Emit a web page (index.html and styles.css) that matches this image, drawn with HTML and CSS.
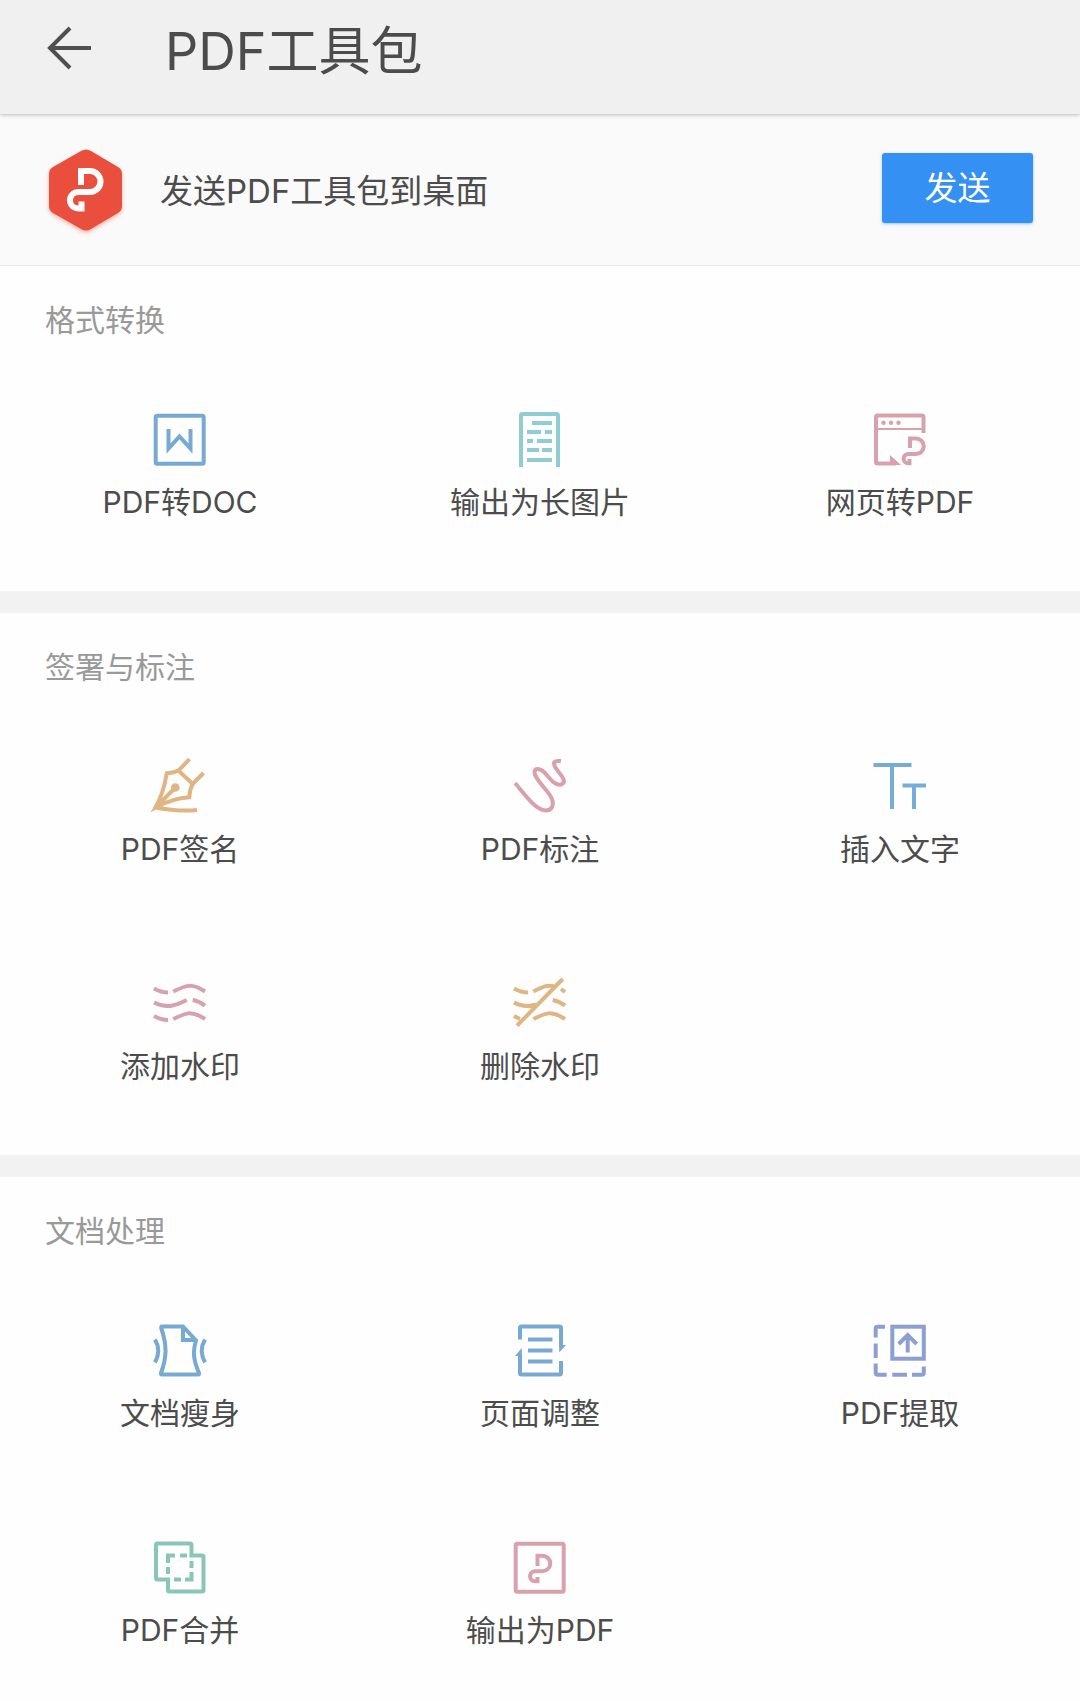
FILE: index.html
```html
<!DOCTYPE html>
<html lang="zh-CN">
<head>
  <meta charset="UTF-8" />
  <meta name="viewport" content="width=device-width, initial-scale=1.0" />
  <title>PDF工具包</title>
  <link rel="stylesheet" href="styles.css">
</head>
<body>
  <header class="topbar">
    <button type="button" class="back" aria-label="返回">
      <svg width="48" height="48" viewBox="0 0 48 48"><path d="M25 4L5 24l20 20M5 24h41" /></svg>
    </button>
    <h1>PDF工具包</h1>
  </header>

  <main>
    <div class="banner">
      <svg class="logo" width="80" height="90" viewBox="0 -3 80 90">
        <path class="logo-shape" d="M36 5q5-3 10 0l27 16q4 2 4 7v32q0 5-4 7L46 83q-5 3-10 0L8 67q-4-2-4-7V28q0-5 4-7z" />
        <path class="logo-mark" d="M36 39V25h9a10.500 10.500 0 0 1 0 21H34c-12 0-12 16.500 0 16.500h2.500v-7" />
      </svg>
      <p>发送PDF工具包到桌面</p>
      <button type="button" class="send">发送</button>
    </div>

    <section class="group">
      <h2>格式转换</h2>
      <div class="tools">
        <a href="#" class="tool">
          <svg class="icon blue" viewBox="0 0 60 60"><rect x="5.700" y="5.700" width="48" height="48" rx="1.500" /><path d="M18.500 19v19.500L29.500 26.500l11 12V19" /></svg>
          <span>PDF转DOC</span>
        </a>
        <a href="#" class="tool">
          <svg class="icon cyan" viewBox="0 0 60 60"><path d="M11 57V5.500q0-1.500 1.500-1.500h34q1.500 0 1.500 1.500V57M22 13h20M17 22h14M35 22h7M17 31h6M27 31h15M17 40h12M32 40h10M17 50h25" /></svg>
          <span>输出为长图片</span>
        </a>
        <a href="#" class="tool">
          <svg class="icon pink" viewBox="0 0 60 60"><path d="M53.500 23V7q0-1.500-1.500-1.500H7.500Q6 5.500 6 7v45q0 1.500 1.500 1.500H26" /><path class="thin" d="M6 19h47" /><path class="solid" d="M20 45l11 10H20z" /><circle class="solid" cx="13.500" cy="12.700" r="2.200" /><circle class="solid" cx="21" cy="12.700" r="2.200" /><circle class="solid" cx="28.500" cy="12.700" r="2.200" /><path d="M40 38v-9.500h6a7.500 7.500 0 0 1 0 15.500h-7.500c-6.500 0-6.500 9.300 0 9.300h1V49" /></svg>
          <span>网页转PDF</span>
        </a>
      </div>
    </section>

    <section class="group">
      <h2>签署与标注</h2>
      <div class="tools">
        <a href="#" class="tool">
          <svg class="icon gold" viewBox="0 0 60 60"><path d="M39.500 2L28.500 13.700 42.700 27 53.500 16M28.500 13.700Q23 16 16.700 16.300 14 35 5.500 50.500 22 41.500 39.300 40.300 39.500 33 42.700 27M5.500 50.500L25 31M5.500 50.500Q30 55 47 53" /><circle class="solid" cx="25.300" cy="30.500" r="4.300" /></svg>
          <span>PDF签名</span>
        </a>
        <a href="#" class="tool">
          <svg class="icon pink" viewBox="0 0 60 60"><path d="M5 26C13 35 25 53.500 36 53.500C42 53.500 44.500 48 41.500 41C38 33 25 23 24.500 15.500C24.500 10.500 30 11 34 15C39 20 44 29 51 27.500C57 25 52 19 49 15.500C43 8 41 3 51 4" /></svg>
          <span>PDF标注</span>
        </a>
        <a href="#" class="tool">
          <svg class="icon sky" viewBox="0 0 60 60"><path d="M3.500 8h38M22 8v44M32.500 28.500h23.500M44 28.500V52" /></svg>
          <span>插入文字</span>
        </a>
        <a href="#" class="tool">
          <svg class="icon pink" viewBox="0 0 60 60"><path d="M4 14.500q7 4 14 4M23.300 17.500c12-6 18-9 31.700 0M4 28.500c12 6 20 4 32.700-2.500M42.700 26q6 1 12.300 5.500M4 42q7 4 14 4M23.300 45c12-6 18-9 31.700 0" /></svg>
          <span>添加水印</span>
        </a>
        <a href="#" class="tool">
          <svg class="icon gold" viewBox="0 0 60 60"><path d="M4 14.500q7 4 14 4M23.300 17.500c10-5 14-7 21-5M51 15l4 3M4 28.500c9 5 16 4 22 2M42.700 26q6 1 12.300 5.500M4 42l6 3M23.300 45c12-6 18-9 31.700 0M52.700 5L7 51.700" /></svg>
          <span>删除水印</span>
        </a>
      </div>
    </section>

    <section class="group">
      <h2>文档处理</h2>
      <div class="tools">
        <a href="#" class="tool">
          <svg class="icon blue" viewBox="0 0 60 60"><path d="M33 5.500H12q-1 0-.8 1.500C17 24 17 36 11 52q-.5 1.500 1 1.500h36q1.500 0 1-1.500C43.500 39 42.500 31 46 19.500zM33 5.500v13.500h13M5 18.500q6.500 11 0 23M55 18.500q-6.500 11 0 23" /></svg>
          <span>文档瘦身</span>
        </a>
        <a href="#" class="tool">
          <svg class="icon blue" viewBox="0 0 60 60"><path d="M10 18.500V7q0-1.500 1.500-1.500h38q1.500 0 1.500 1.500v19M51 40v12q0 1.500-1.500 1.500h-38Q10 53.500 10 52V33M18 18.500h24.500M18 29.500h24.500M18 40.500h24.500" /><path class="solid" d="M49.200 24H56l-6.800 7.500zM11.800 27v8H5z" /></svg>
          <span>页面调整</span>
        </a>
        <a href="#" class="tool">
          <svg class="icon indigo" viewBox="0 0 60 60"><rect x="22.300" y="5.700" width="31.500" height="32" /><path d="M37.700 31.500V14M28.700 23l9-9 9 9M5.700 16.500V7.500q0-1.800 1.800-1.800H15M5.700 22.500V37M5.700 42.500v9q0 2.200 2 2.200h9M22.300 53.700h14.700M42 53.700h9.500q2.300 0 2.300-2V45.500" /></svg>
          <span>PDF提取</span>
        </a>
        <a href="#" class="tool">
          <svg class="icon green" viewBox="0 0 60 60"><path d="M41.500 17.500V7q0-1.500-1.500-1.500H7.500Q6 5.500 6 7v33q0 1.500 1.500 1.500H18V52q0 1.500 1.500 1.500H52q1.500 0 1.500-1.500V19q0-1.500-1.500-1.500H39.500M18 25v-7.500h7M30 17.500h7M18 29v7M24 41.500h7M41.500 23v7M41.500 34v7.500H35" /></svg>
          <span>PDF合并</span>
        </a>
        <a href="#" class="tool">
          <svg class="icon pink" viewBox="0 0 60 60"><rect x="5.700" y="5.700" width="48" height="48" rx="1.500" /><path d="M27.500 28V17.700h5a7.500 7.500 0 0 1 0 15.500H25c-6.500 0-6.500 10 0 10h2.500V39" /></svg>
          <span>输出为PDF</span>
        </a>
      </div>
    </section>
  </main>
</body>
</html>
```

FILE: styles.css
```css
* {
  margin: 0;
  padding: 0;
  box-sizing: border-box;
}

body {
  font-family: Inter, "Noto Sans CJK SC", sans-serif;
  background-color: #fefefe;
  color: #4c4c4c;
}

button {
  font-family: inherit;
  border: none;
  cursor: pointer;
}

svg {
  display: block;
  fill: none;
  overflow: visible;
}

/* Top bar */
.topbar {
  position: relative;
  display: flex;
  align-items: center;
  gap: 72px;
  padding: 16px 45px 34px;
  background-color: #f0f0f0;
  box-shadow: 0 1px 4px rgba(0, 0, 0, 0.25);
}

.topbar h1 {
  padding-top: 8px;
  font-size: 52px;
  line-height: 56px;
  font-weight: 400;
}

.back {
  background: none;
}

.back path {
  stroke: #505050;
  stroke-width: 4;
}

/* Send to desktop */
.banner {
  display: flex;
  align-items: center;
  padding: 29px 47px 32px 45px;
  background-color: #fafafa;
  border-bottom: 1px solid #e6e6e6;
}

.banner p {
  flex: 1;
  padding: 6px 0 0 35px;
  font-size: 33px;
  line-height: 44px;
}

.logo-shape {
  fill: #ea4e3d;
  filter: drop-shadow(0 2px 2px rgba(234, 78, 61, 0.4));
}

.logo-mark {
  stroke: #fff;
  stroke-width: 6;
}

.send {
  width: 151px;
  height: 70px;
  border-radius: 3px;
  background-color: #3590f3;
  box-shadow: 0 1px 3px rgba(53, 144, 243, 0.5);
  color: #fff;
  font-size: 33px;
  line-height: 44px;
}

/* Tool groups */
.group {
  padding: 32px 0 67px;
  border-bottom: 22px solid #f2f2f2;
}

.group:last-child {
  padding-bottom: 32px;
  border-bottom: none;
}

.group h2 {
  padding: 0 45px;
  margin-bottom: 68px;
  font-size: 30px;
  line-height: 44px;
  font-weight: 400;
  color: #999;
}

.tools {
  display: grid;
  grid-template-columns: repeat(3, 1fr);
  row-gap: 103px;
}

.tool {
  display: flex;
  flex-direction: column;
  align-items: center;
  gap: 10px;
  font-size: 30px;
  line-height: 44px;
  color: inherit;
  text-decoration: none;
}

.icon {
  width: 60px;
  height: 60px;
  stroke: currentColor;
  stroke-width: 4px;
}

.icon .thin {
  stroke-width: 2px;
}

.icon .solid {
  fill: currentColor;
  stroke: none;
}

.blue {
  color: #78a9d2;
}

.sky {
  color: #74add8;
}

.cyan {
  color: #8fccd4;
}

.pink {
  color: #d7a1ae;
}

.gold {
  color: #dfb683;
}

.indigo {
  color: #8c9fd0;
}

.green {
  color: #89c6b6;
}
```
